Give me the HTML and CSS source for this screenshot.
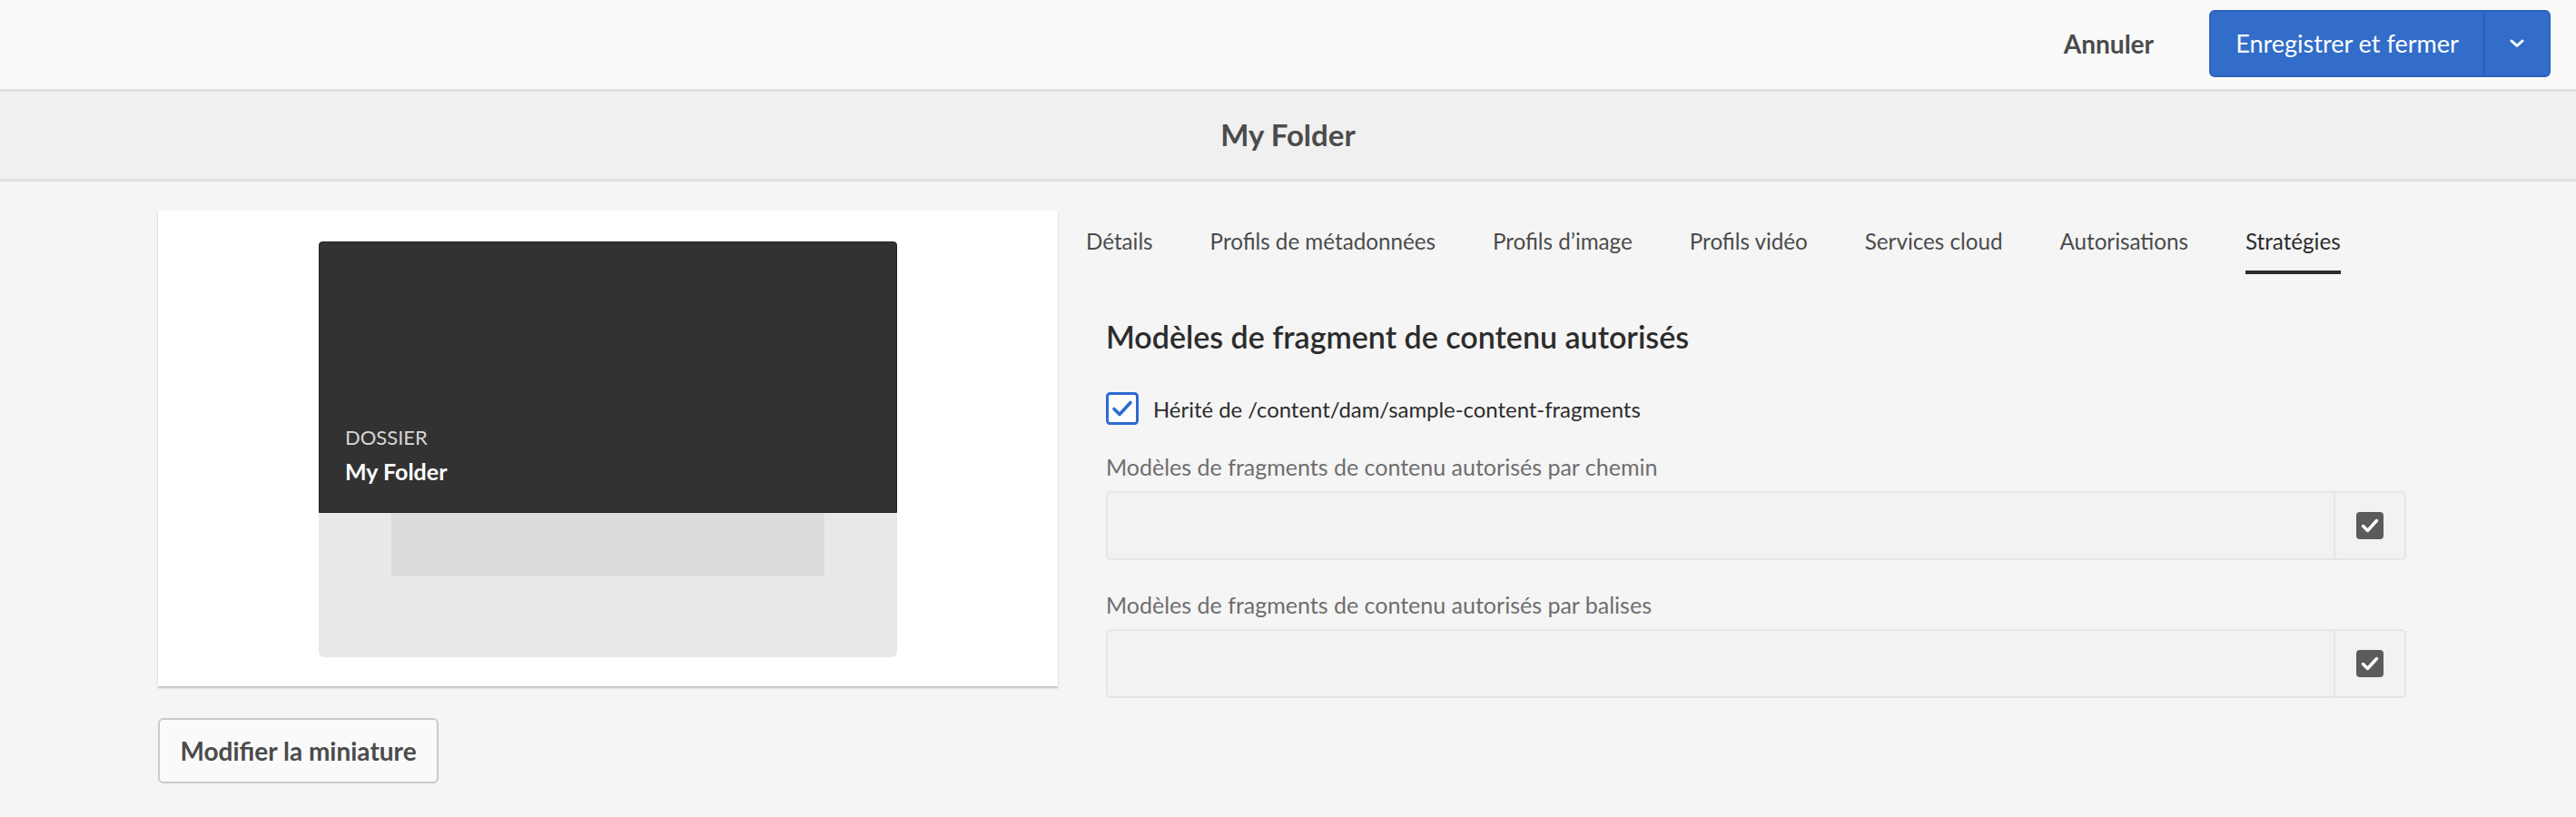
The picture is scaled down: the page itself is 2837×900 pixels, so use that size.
FILE: index.html
```html
<!DOCTYPE html>
<html lang="fr">
<head>
<meta charset="utf-8">
<title>My Folder</title>
<link rel="stylesheet" href="styles.css">
</head>
<body>
<header class="topbar">
  <button class="btn-quiet">Annuler</button>
  <div class="split">
    <button class="split-main">Enregistrer et fermer</button>
    <button class="split-toggle" aria-label="Plus">
      <svg width="16" height="10" viewBox="0 0 16 10"><path d="M2 2 L8 7.5 L14 2" fill="none" stroke="#fff" stroke-width="3" stroke-linecap="round" stroke-linejoin="round"/></svg>
    </button>
  </div>
</header>
<div class="titlebar">My Folder</div>
<main class="content">
  <section class="left">
    <div class="card">
      <div class="thumb">
        <div class="thumb-dark">
          <div class="thumb-type">DOSSIER</div>
          <div class="thumb-name">My Folder</div>
        </div>
        <div class="thumb-light">
          <div class="thumb-inner"></div>
        </div>
      </div>
    </div>
    <button class="btn-secondary">Modifier la miniature</button>
  </section>
  <section class="right">
    <nav class="tabs">
      <span class="tab">Détails</span>
      <span class="tab">Profils de métadonnées</span>
      <span class="tab">Profils d’image</span>
      <span class="tab">Profils vidéo</span>
      <span class="tab">Services cloud</span>
      <span class="tab">Autorisations</span>
      <span class="tab active">Stratégies</span>
    </nav>
    <div class="panel">
      <h2 class="heading">Modèles de fragment de contenu autorisés</h2>
      <label class="check-row">
        <span class="checkbox">
          <svg width="36" height="36" viewBox="0 0 36 36"><rect x="1.5" y="1.5" width="33" height="33" rx="3" fill="#fff" stroke="#2d6bd1" stroke-width="3"/><path d="M9 18.5 L15 24.5 L27 11.5" fill="none" stroke="#2d6bd1" stroke-width="3.6" stroke-linecap="round" stroke-linejoin="round"/></svg>
        </span>
        <span class="check-label">Hérité de /content/dam/sample-content-fragments</span>
      </label>
      <div class="field-label">Modèles de fragments de contenu autorisés par chemin</div>
      <div class="field">
        <div class="field-input"></div>
        <div class="field-btn">
          <svg width="32" height="32" viewBox="0 0 32 32"><rect x="1" y="1" width="30" height="30" rx="4" fill="#5b5b5b"/><path d="M8.5 16.5 L13.5 21.5 L23.5 10.5" fill="none" stroke="#fff" stroke-width="3.4" stroke-linecap="round" stroke-linejoin="round"/></svg>
        </div>
      </div>
      <div class="field-label second">Modèles de fragments de contenu autorisés par balises</div>
      <div class="field">
        <div class="field-input"></div>
        <div class="field-btn">
          <svg width="32" height="32" viewBox="0 0 32 32"><rect x="1" y="1" width="30" height="30" rx="4" fill="#5b5b5b"/><path d="M8.5 16.5 L13.5 21.5 L23.5 10.5" fill="none" stroke="#fff" stroke-width="3.4" stroke-linecap="round" stroke-linejoin="round"/></svg>
        </div>
      </div>
    </div>
  </section>
</main>
</body>
</html>
```
FILE: styles.css
```css
* { box-sizing: border-box; }
html, body { margin: 0; padding: 0; }
body {
  background: #f5f5f5;
  font-family: Lato, "Open Sans", sans-serif;
  color: #4b4b4b;
  height: 900px;
  overflow: hidden;
}
button { font-family: inherit; cursor: pointer; }

.topbar {
  height: 101px;
  background: #fafafa;
  border-bottom: 3px solid #e1e1e1;
  display: flex;
  justify-content: flex-end;
  align-items: center;
  padding: 0 28px 3px 0;
  gap: 31px;
}
.btn-quiet {
  background: none;
  border: none;
  font-size: 28px;
  font-weight: 700;
  color: #4b4b4b;
  padding: 0 30px;
  height: 74px;
}
.split {
  display: flex;
  height: 74px;
  background: #326dc9;
  border: 2px solid #2b62be;
  border-radius: 6px;
  overflow: hidden;
}
.split-main {
  width: 300px;
  background: none;
  border: none;
  color: #fff;
  font-size: 27px;
  font-weight: 400;
  padding: 0;
}
.split-toggle {
  width: 72px;
  background: none;
  border: none;
  border-left: 2px solid #2a5fba;
  display: flex;
  align-items: center;
  justify-content: center;
  padding: 0;
}

.titlebar {
  height: 99px;
  background: #f0f0f0;
  border-bottom: 3px solid #e0e0e0;
  display: flex;
  align-items: center;
  justify-content: center;
  font-size: 33px;
  font-weight: 700;
  color: #4b4b4b;
  padding-bottom: 3px;
}

.content {
  display: flex;
  gap: 31px;
  padding: 32px 0 0 174px;
}
.left { width: 991px; display: flex; flex-direction: column; align-items: flex-start; }
.card {
  width: 991px;
  height: 524px;
  background: #fff;
  box-shadow: 0 2px 2px rgba(0,0,0,0.22);
  display: flex;
  justify-content: center;
  padding-top: 34px;
}
.thumb {
  width: 637px;
  height: 458px;
  display: flex;
  flex-direction: column;
}
.thumb-dark {
  height: 299px;
  background: #323232;
  border: 1px solid #222;
  border-radius: 4px 4px 0 0;
  display: flex;
  flex-direction: column;
  justify-content: flex-end;
  padding: 0 0 29px 28px;
}
.thumb-type {
  font-size: 22px;
  color: #d6d6d6;
  line-height: 28px;
}
.thumb-name {
  font-size: 25px;
  font-weight: 700;
  color: #fff;
  line-height: 32px;
  margin-top: 7px;
}
.thumb-light {
  flex: 1;
  background: #e8e8e8;
  border-radius: 0 0 6px 6px;
  display: flex;
  justify-content: center;
}
.thumb-inner {
  width: 477px;
  height: 70px;
  background: #dcdcdc;
}
.btn-secondary {
  margin-top: 35px;
  width: 309px;
  height: 72px;
  background: #fafafa;
  border: 2px solid #cacaca;
  border-radius: 6px;
  font-size: 28px;
  font-weight: 700;
  color: #4b4b4b;
  padding: 0;
}

.right { width: 1454px; }
.tabs { display: flex; gap: 63px; }
.tab {
  font-size: 24.2px;
  line-height: 30px;
  color: #4b4b4b;
  padding: 19px 0 17px;
  border-bottom: 4px solid transparent;
}
.tab.active { color: #2c2c2c; border-bottom-color: #2c2c2c; }

.panel { padding-left: 22px; display: flex; flex-direction: column; }
.heading {
  margin: 49px 0 0;
  font-size: 34px;
  line-height: 40px;
  font-weight: 600;
  color: #2c2c2c;
}
.check-row {
  margin-top: 41px;
  display: flex;
  align-items: center;
  gap: 16px;
  height: 36px;
}
.checkbox { width: 36px; height: 36px; display: flex; }
.check-label { font-size: 23.9px; color: #2c2c2c; }
.field-label {
  margin-top: 31px;
  font-size: 25px;
  line-height: 30px;
  color: #6e6e6e;
}
.field-label.second { margin-top: 34px; }
.field {
  margin-top: 12px;
  height: 76px;
  display: flex;
  background: #f2f2f2;
  border: 2px solid #e6e6e6;
  border-radius: 5px;
}
.field-input { flex: 1; }
.field-btn {
  width: 78px;
  border-left: 2px solid #e6e6e6;
  display: flex;
  align-items: center;
  justify-content: center;
}
```
